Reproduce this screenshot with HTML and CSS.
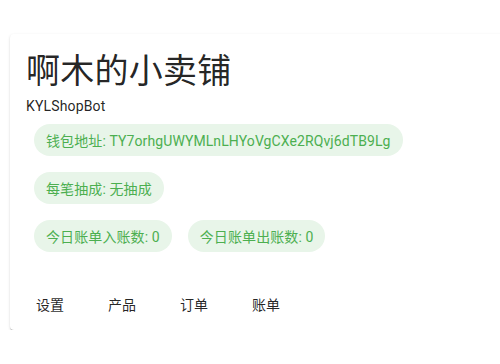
FILE: index.html
```html
<!DOCTYPE html>
<html lang="zh">
<head>
  <meta charset="UTF-8">
  <meta name="viewport" content="width=device-width, initial-scale=1.0">
  <title>啊木的小卖铺</title>
  <link rel="stylesheet" href="styles.css">
</head>
<body>
  <div class="card">
    <div class="card-content">
      <h1 class="shop-title">啊木的小卖铺</h1>
      <p class="bot-name">KYLShopBot</p>
      <div class="chips">
        <div class="chip-row"><span class="chip">钱包地址: TY7orhgUWYMLnLHYoVgCXe2RQvj6dTB9Lg</span></div>
        <div class="chip-row"><span class="chip">每笔抽成: 无抽成</span></div>
        <div class="chip-row">
          <span class="chip">今日账单入账数: 0</span>
          <span class="chip">今日账单出账数: 0</span>
        </div>
      </div>
    </div>
    <div class="card-actions">
      <button class="action">设置</button>
      <button class="action">产品</button>
      <button class="action">订单</button>
      <button class="action">账单</button>
    </div>
  </div>
</body>
</html>
```

FILE: styles.css
```css
html, body { overflow: hidden; }
body { margin: 0; padding: 34px 0 0 10px; background: #fff; font-family: Roboto, "Noto Sans CJK SC", sans-serif; color: rgba(0, 0, 0, 0.87); }
.card { width: 520px; background: #fff; border-radius: 4px; box-shadow: 0 2px 1px -1px rgba(0,0,0,.2), 0 1px 1px 0 rgba(0,0,0,.14), 0 1px 3px 0 rgba(0,0,0,.12); }
.card-content { padding: 16px 16px 17px 16px; }
.shop-title { margin: 0; font-size: 34px; font-weight: 400; line-height: 42px; letter-spacing: 0.25px; }
.bot-name { margin: 4px 0 0; font-size: 14px; line-height: 20px; letter-spacing: 0.15px; }
.chip-row { display: flex; }
.chip { display: inline-flex; align-items: center; height: 32px; margin: 8px; padding: 0 12px; border-radius: 16px; background: #e8f5e9; color: #4caf50; font-size: 14px; letter-spacing: 0.1px; white-space: nowrap; }
.card-actions { display: flex; padding: 8px; gap: 8px; }
.action { min-width: 64px; height: 37px; padding: 6px 8px; border: none; background: none; border-radius: 4px; font-family: inherit; font-size: 14px; font-weight: 400; color: rgba(0, 0, 0, 0.87); cursor: pointer; }
.action:hover { background: rgba(0, 0, 0, 0.04); }
```
